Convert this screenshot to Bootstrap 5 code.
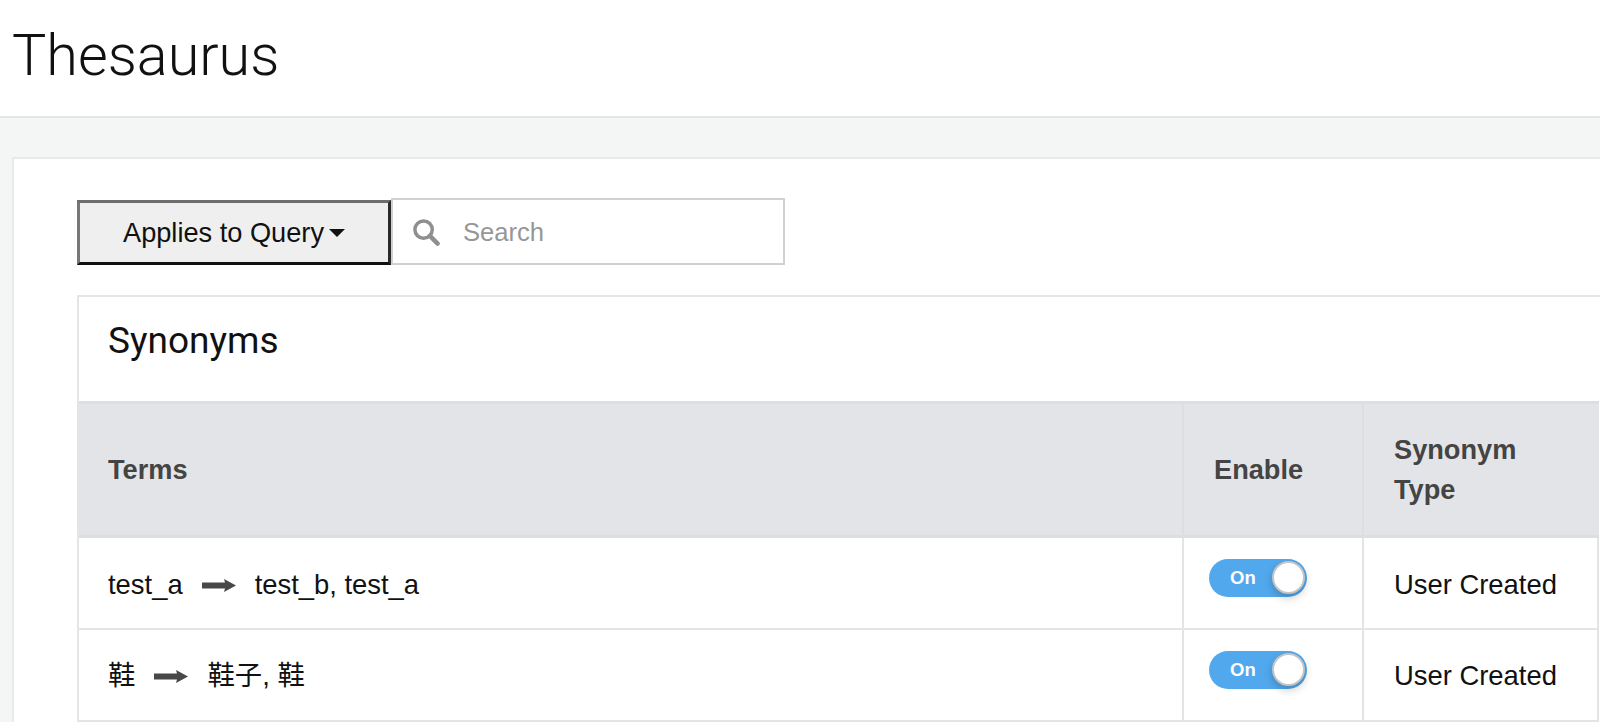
<!DOCTYPE html>
<html lang="en">
<head>
<meta charset="utf-8">
<title>Thesaurus</title>
<link href="https://cdn.jsdelivr.net/npm/bootstrap@5.3.0/dist/css/bootstrap.min.css" rel="stylesheet">
<style>
html, body { height: 722px; overflow: hidden; }
body { background: #f4f6f6; font-family: "Liberation Sans", "Noto Sans CJK SC", sans-serif; color: #111; }
.page-head { height: 118px; background: #fff; border-bottom: 2px solid #e4e7e7; padding: 0 0 5px 12px; }
.page-head h1 { font-family: Roboto, sans-serif; font-weight: 300; font-size: 57.500px; line-height: 1; margin: 0; color: #111; }
.sheet { margin: 39px 0 0 12px; background: #fff; border: 2px solid #e8eaea; border-right: 0; border-bottom: 0; height: 566px; padding: 39px 0 0 63px; }
.tools { height: 67px; }
.apply-btn { width: 314px; height: 65px; margin-top: 2px; font-size: 27.200px; color: #111; background: #efefef; border: 3px solid; border-color: #6d6d6d #2a2a2a #111 #777; border-radius: 0; padding: 1px 0 0; }
.apply-btn::after { margin-left: 5px; vertical-align: .18em; border-top-color: #111; }
.search-box { width: 394px; height: 67px; border: 2px solid #cfd1d1; padding-left: 19px; gap: 23px; background: #fff; }
.search-box input { border: 0; outline: 0; font-size: 25.600px; width: 280px; color: #111; padding: 2px 0 0; background: transparent; }
.search-box input::placeholder { color: #979797; opacity: 1; }
.syn-card { margin-top: 30px; border: 2px solid #e4e6e6; border-right: 0; border-radius: 0; height: 430px; overflow: hidden; }
.syn-title { height: 104px; padding: 22px 0 0 29px; font-family: Roboto, sans-serif; font-size: 37px; line-height: 44px; margin: 0; font-weight: 400; color: #111; }
.syn-table { table-layout: fixed; width: 1520px; margin: 0; border-collapse: collapse; }
.syn-table > :not(caption) > * > * { border: 0; border-left: 2px solid #e2e4e6; padding: 1px 0 0 29px; vertical-align: middle; box-shadow: none; background: transparent; color: #111; }
.syn-table > :not(caption) > * > :nth-child(n+2) { padding-left: 30px; }
.syn-table th:first-child, .syn-table td:first-child { border-left: 0; }
.syn-table th:last-child, .syn-table td:last-child { border-right: 2px solid #e2e4e6; }
.syn-table thead tr { height: 134px; background: #e3e4e8; border-top: 3px solid #dcdee1; border-bottom: 3px solid #dcdee1; }
.syn-table thead th { font-size: 27.200px; line-height: 40px; font-weight: 700; color: #444; border-left-color: #dcdee1; }
.syn-table tbody tr { height: 92px; border-bottom: 2px solid #e2e4e6; }
.syn-table tbody td { font-size: 27.400px; padding-top: 3px; }
.col-terms { width: 1104px; }
.col-enable { width: 180px; }
.go-arrow { width: 34px; height: 13px; margin: 0 19px 0 19px; vertical-align: 2px; }
.on-switch { width: 98px; height: 38px; margin-left: -5px; background: #52a8ec; border-radius: 19px; position: relative; margin-bottom: 12px; color: #fff; font-weight: 700; font-size: 18.500px; line-height: 37px; padding-left: 21px; }
.on-knob { position: absolute; right: 2px; top: 2px; width: 33px; height: 33px; border-radius: 50%; background: #fff; border: 2px solid #c4c4c4; box-shadow: 0 4px 8px rgba(0,0,0,.2); }
</style>
</head>
<body>
<header class="page-head d-flex align-items-center"><h1>Thesaurus</h1></header>
<main class="sheet">
  <div class="tools d-flex align-items-start">
    <button type="button" class="btn apply-btn dropdown-toggle">Applies to Query</button>
    <div class="search-box d-flex align-items-center">
      <svg width="28" height="28" viewBox="0 0 29 29" fill="none" stroke="#8f8f8f"><circle cx="12" cy="12" r="9" stroke-width="3.6"/><path d="M18.500 18.500L26.500 26.500" stroke-width="4.600" stroke-linecap="round"/></svg>
      <input type="text" placeholder="Search" aria-label="Search">
    </div>
  </div>
  <section class="card syn-card">
    <h2 class="syn-title">Synonyms</h2>
    <table class="table syn-table">
      <colgroup><col class="col-terms"><col class="col-enable"><col></colgroup>
      <thead><tr><th>Terms</th><th>Enable</th><th>Synonym<br>Type</th></tr></thead>
      <tbody>
        <tr><td>test_a<svg class="go-arrow" viewBox="0 0 34 13"><path d="M0 3.500H23L22 0L34 6.500L22 13L23 9.500H0Z" fill="#484848"/></svg>test_b, test_a</td><td><div class="on-switch">On<span class="on-knob"></span></div></td><td>User Created</td></tr>
        <tr><td>鞋<svg class="go-arrow" viewBox="0 0 34 13"><path d="M0 3.500H23L22 0L34 6.500L22 13L23 9.500H0Z" fill="#484848"/></svg>鞋子, 鞋</td><td><div class="on-switch">On<span class="on-knob"></span></div></td><td>User Created</td></tr>
      </tbody>
    </table>
  </section>
</main>
<script src="https://cdn.jsdelivr.net/npm/bootstrap@5.3.0/dist/js/bootstrap.bundle.min.js"></script>
</body>
</html>
